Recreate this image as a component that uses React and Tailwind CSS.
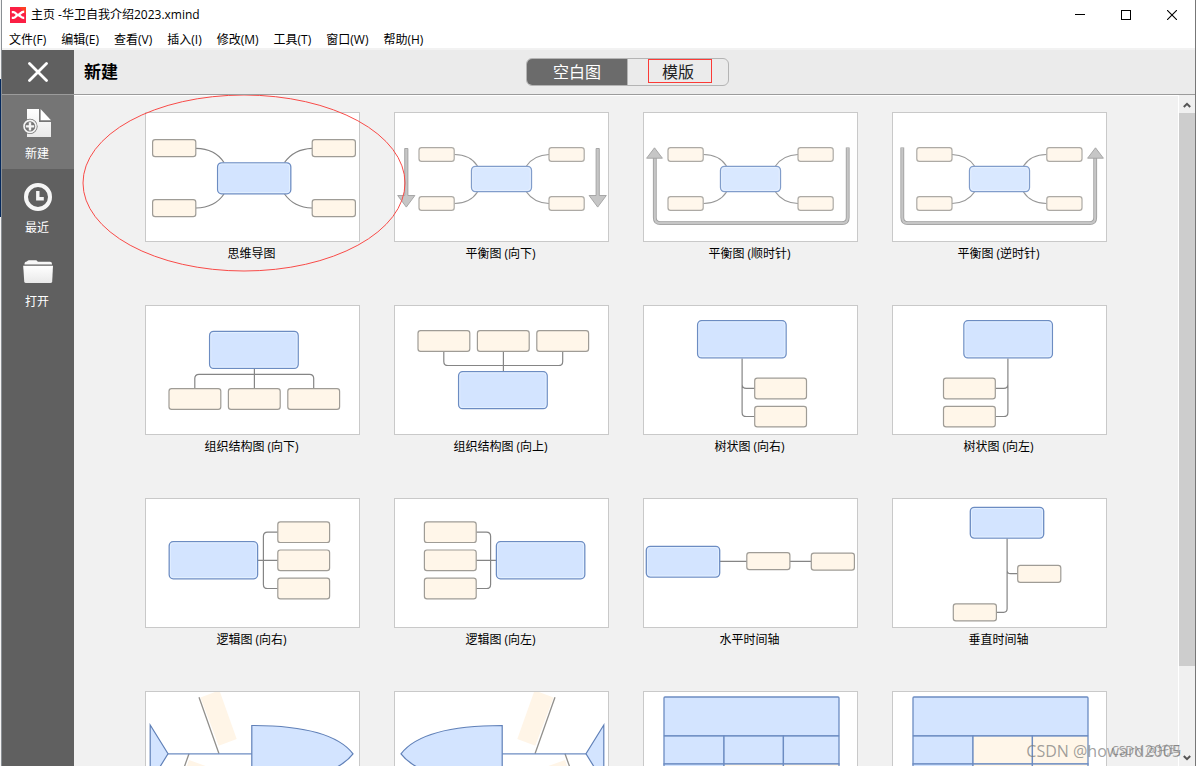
import React from "react";

const MENUS = [
  "文件(F)",
  "编辑(E)",
  "查看(V)",
  "插入(I)",
  "修改(M)",
  "工具(T)",
  "窗口(W)",
  "帮助(H)",
];

/* ---------- diagram primitives ---------- */

function Main({ x, y, w, h }) {
  return (
    <g>
      <rect x={x} y={y} width={w} height={h} rx="4" fill="#d3e4ff" stroke="#6c8cc2" strokeWidth="1.3" />
      <rect x={x + 1.2} y={y + 1.2} width={w - 2.4} height={h - 2.4} rx="3" fill="none" stroke="#e6f1ff" strokeWidth="0.8" />
    </g>
  );
}

function Topic({ x, y, w, h }) {
  return <rect x={x} y={y} width={w} height={h} rx="2.6" fill="#fff6e9" stroke="#9f9c96" strokeWidth="1.2" />;
}

function Line({ d }) {
  return <path d={d} fill="none" stroke="#858585" strokeWidth="1.2" />;
}

function Mirror({ children }) {
  return <g transform="translate(215 0) scale(-1 1)">{children}</g>;
}

function Balanced() {
  return (
    <g opacity="0.85">
      <Line d="M60.5 42.5Q76 42.5 83.5 54M60.5 91.5Q76 91.5 83.5 80M155 42.5Q140 43 132.5 54M155 91.5Q140 91 132.5 80" />
      <Topic x={25} y={35.6} w={35.2} h={13.8} />
      <Topic x={25} y={84.6} w={35.2} h={13.8} />
      <Topic x={155} y={35.6} w={35.2} h={13.8} />
      <Topic x={155} y={84.6} w={35.2} h={13.8} />
      <Main x={77.5} y={54.4} w={60} h={25.2} />
    </g>
  );
}

function DownArrow({ x }) {
  return (
    <path
      d={`M${x - 1.6} 36.5h3.2v47h7l-8.6 11.6l-8.6 -11.6h7z`}
      fill="#c6c6c6"
      stroke="#a0a0a0"
      strokeWidth="0.9"
    />
  );
}

function TurnArrow() {
  const d = "M11.8 46V105.5Q11.8 111.2 17.5 111.2H199Q204.7 111.2 204.7 105.5V35.5";
  return (
    <g>
      <path d={d} fill="none" stroke="#9d9d9d" strokeWidth="3.8" />
      <path d={d} fill="none" stroke="#c6c6c6" strokeWidth="2.2" />
      <path d="M11.5 35.8L19.4 46.2H3.6Z" fill="#c6c6c6" stroke="#a0a0a0" strokeWidth="0.9" />
    </g>
  );
}

function MindMap() {
  return (
    <g>
      <Line d="M51 36.3Q70 36.5 79 50.5M51 96Q70 95.5 79 82M167 36.3Q149 37 139.5 50.5M167 96Q149 95.5 139.5 82" />
      <Topic x={7.6} y={27.7} w={43.2} h={17} />
      <Topic x={7.6} y={87.7} w={43.2} h={17} />
      <Topic x={167.2} y={27.7} w={43.2} h={17} />
      <Topic x={167.2} y={87.7} w={43.2} h={17} />
      <Main x={72.6} y={50.8} w={73.2} h={31} />
    </g>
  );
}

function OrgDown() {
  return (
    <g>
      <Line d="M109.4 64V83.5M49.8 83.5V73.5Q49.8 69.4 54 69.4H164.5Q168.7 69.4 168.7 73.5V83.5" />
      <Main x={64.6} y={26.4} w={88.6} h={37} />
      <Topic x={24} y={83.7} w={51.8} h={20.6} />
      <Topic x={83.4} y={83.7} w={51.8} h={20.6} />
      <Topic x={142.8} y={83.7} w={51.8} h={20.6} />
    </g>
  );
}

function OrgUp() {
  return (
    <g>
      <Line d="M109.4 46.5V66.5M49.8 46.5V56.4Q49.8 60.5 54 60.5H164.5Q168.7 60.5 168.7 56.4V46.5" />
      <Main x={64.6} y={66.7} w={88.6} h={37} />
      <Topic x={24} y={25.7} w={51.8} h={20.6} />
      <Topic x={83.4} y={25.7} w={51.8} h={20.6} />
      <Topic x={142.8} y={25.7} w={51.8} h={20.6} />
    </g>
  );
}

function Tree() {
  return (
    <g>
      <Line d="M99.1 53.5V79.3Q99.1 83.4 103.3 83.4H111.5M99.1 53.5V107.4Q99.1 111.5 103.3 111.5H111.5" />
      <Main x={54.6} y={15.7} w={88.5} h={37.2} />
      <Topic x={111.7} y={73.2} w={51.8} h={20.6} />
      <Topic x={111.7} y={101.3} w={51.8} h={20.6} />
    </g>
  );
}

function Logic() {
  return (
    <g>
      <Line d="M112.7 62.4H132.7M132.7 34.2H122.6Q118.4 34.2 118.4 38.3V86.4Q118.4 90.5 122.6 90.5H132.7" />
      <Main x={24.2} y={43.7} w={88.4} h={37.1} />
      <Topic x={132.8} y={23.9} w={51.8} h={20.6} />
      <Topic x={132.8} y={52} w={51.8} h={20.6} />
      <Topic x={132.8} y={80.2} w={51.8} h={20.6} />
    </g>
  );
}

function TimelineH() {
  return (
    <g>
      <Line d="M77 63.4H104M147 63.4H168" />
      <Main x={3.3} y={48.3} w={73.4} h={30.8} />
      <Topic x={103.8} y={54.6} w={43.1} h={17.1} />
      <Topic x={168.3} y={55.1} w={43.1} h={17.1} />
    </g>
  );
}

function TimelineV() {
  return (
    <g>
      <Line d="M115.1 40.5V72.2Q115.1 75.7 118.6 75.7H125.5M115.1 40.5V110.8Q115.1 114.3 111.6 114.3H104.6" />
      <Main x={78.3} y={9.3} w={73.4} h={30.8} />
      <Topic x={125.7} y={67.3} w={43.1} h={17.1} />
      <Topic x={61.3} y={105.8} w={43.1} h={17.1} />
    </g>
  );
}

function Fishbone() {
  return (
    <g>
      <path d="M55.5 6.6L70 1H75L91.7 48L73.7 54.7Z" fill="#fff5e7" />
      <path d="M44 69L62 75.5L46 120L28 113Z" fill="#fff5e7" />
      <path d="M54 6.3L74 62.7M44 62.7L24 119" fill="none" stroke="#92908c" strokeWidth="1.3" />
      <path d="M23 62.8H106.8" fill="none" stroke="#6c8cc2" strokeWidth="1.3" />
      <path
        d="M5.2 34L23 62.8L5.2 91.6ZM106.8 34.5C153 34.5 192 42 208 62.8C192 83.6 153 91 106.8 91Z"
        fill="#d3e4ff"
        stroke="#6080b8"
        strokeWidth="1.2"
      />
    </g>
  );
}

function Matrix({ cell }) {
  return (
    <g stroke="#6c8cc2" strokeWidth="1.3" fill="#d3e4ff">
      <rect x="21" y="6" width="175" height="39" rx="1" />
      <rect x="21" y="45" width="60" height="28" />
      <rect x="81" y="45" width="59.4" height="28" fill={cell} />
      <rect x="140.4" y="45" width="55.6" height="28" fill={cell} />
      <rect x="21" y="73" width="60" height="28" />
      <rect x="81" y="73" width="59.4" height="28" fill="#fff6e9" />
      <rect x="140.4" y="73" width="55.6" height="28" fill="#fff6e9" />
    </g>
  );
}

const TEMPLATES = [
  { label: "思维导图", art: <MindMap />, marked: true },
  { label: "平衡图 (向下)", art: <g><Balanced /><DownArrow x={12.3} /><DownArrow x={203.7} /></g> },
  { label: "平衡图 (顺时针)", art: <g><Balanced /><TurnArrow /></g> },
  { label: "平衡图 (逆时针)", art: <Mirror><Balanced /><TurnArrow /></Mirror> },
  { label: "组织结构图 (向下)", art: <OrgDown /> },
  { label: "组织结构图 (向上)", art: <OrgUp /> },
  { label: "树状图 (向右)", art: <Tree /> },
  { label: "树状图 (向左)", art: <Mirror><Tree /></Mirror> },
  { label: "逻辑图 (向右)", art: <Logic /> },
  { label: "逻辑图 (向左)", art: <Mirror><Logic /></Mirror> },
  { label: "水平时间轴", art: <TimelineH /> },
  { label: "垂直时间轴", art: <TimelineV /> },
  { label: "鱼骨图 (向右)", art: <Fishbone /> },
  { label: "鱼骨图 (向左)", art: <Mirror><Fishbone /></Mirror> },
  { label: "矩阵图 (行)", art: <Matrix cell="#d3e4ff" /> },
  { label: "矩阵图 (列)", art: <Matrix cell="#fff6e9" /> },
];

function TemplateCard({ label, art, marked }) {
  return (
    <button type="button" className="relative flex flex-col items-center gap-1 text-xs leading-4 text-black">
      <span className="block w-full border border-[#c9c9c9] bg-white">
        <svg viewBox="1 1 213 128" className="block h-auto w-full" aria-hidden="true">
          {art}
        </svg>
      </span>
      <span className="pr-0.5">{label}</span>
      {marked && (
        <svg
          viewBox="0 0 324 178"
          className="pointer-events-none absolute -top-[18px] -left-[63px] z-10 h-[178px] w-[324px] max-w-none"
          aria-hidden="true"
        >
          <ellipse cx="162" cy="89" rx="161" ry="88" fill="none" stroke="#f94b48" strokeWidth="1" />
        </svg>
      )}
    </button>
  );
}

/* ---------- sidebar ---------- */

function IconDefs() {
  return (
    <defs>
      <linearGradient id="paper" x1="0" y1="0" x2="0" y2="1">
        <stop offset="0" stopColor="#ffffff" />
        <stop offset="1" stopColor="#e9e9e9" />
      </linearGradient>
    </defs>
  );
}

function NewIcon() {
  return (
    <svg viewBox="0 0 32 32" className="size-8" aria-hidden="true">
      <IconDefs />
      <path d="M5 2H17V15H29V30H5Z" fill="url(#paper)" />
      <path d="M18.6 2L29 13.2H18.6Z" fill="#fff" />
      <circle cx="8" cy="19.4" r="7.6" fill="#757575" />
      <circle cx="8" cy="19.4" r="6" fill="#757575" stroke="#f4f4f4" strokeWidth="1.6" />
      <path d="M8 15.2V23.6M3.8 19.4H12.2" stroke="#f4f4f4" strokeWidth="2.4" />
    </svg>
  );
}

function RecentIcon() {
  return (
    <svg viewBox="0 0 32 32" className="size-8" aria-hidden="true">
      <circle cx="16" cy="16" r="12" fill="none" stroke="#f6f6f6" strokeWidth="4" />
      <path d="M15.8 10V17.8H21.8" fill="none" stroke="#f6f6f6" strokeWidth="3.4" />
    </svg>
  );
}

function OpenIcon() {
  return (
    <svg viewBox="0 0 32 32" className="size-8" aria-hidden="true">
      <path d="M2.5 9Q2.5 6.4 4.8 6.4L6 5.6Q6.2 5.2 7 5.2H14Q14.8 5.2 15.2 6L15.8 6.8H28Q30 6.8 30 9V9.6H2.5Z" fill="#f8f8f8" />
      <path d="M1.2 10.8H31L30.2 26.4Q30 28 28.4 28H4Q2.4 28 2.2 26.4Z" fill="url(#paper)" />
    </svg>
  );
}

function SideItem({ icon, label, active }) {
  return (
    <button
      type="button"
      className={
        "flex h-[74px] w-full flex-col items-center gap-[7px] pt-3 text-xs leading-4 text-white " +
        (active ? "bg-[#757575]" : "")
      }
    >
      {icon}
      <span className="pr-0.5">{label}</span>
    </button>
  );
}

/* ---------- window ---------- */

function TitleBar() {
  return (
    <header className="flex h-[29px] shrink-0 items-center bg-white pl-2">
      <svg viewBox="0 0 16 16" className="size-4" aria-hidden="true">
        <rect width="16" height="16" fill="#fb1f44" />
        <path d="M9 0H16V7Z" fill="#ff3d24" />
        <path d="M1.8 5.2H3.6C5.6 5.2 6 8 8 8S10.6 4.6 14.2 4.6M1.8 10.8H3.6C5.6 10.8 6 8 8 8S10.6 11 14.2 11" fill="none" stroke="#fff" strokeWidth="2.3" />
      </svg>
      <h1 className="ml-[5px] flex-1 text-xs leading-4 text-black">主页 -华卫自我介绍2023.xmind</h1>
      <div className="flex h-full">
        <button type="button" aria-label="最小化" className="flex w-[46px] items-center justify-center">
          <svg viewBox="0 0 10 10" className="size-[10px]"><path d="M0 4.5H10" stroke="#000" /></svg>
        </button>
        <button type="button" aria-label="最大化" className="flex w-[46px] items-center justify-center">
          <svg viewBox="0 0 10 10" className="size-[10px]"><rect x="0.5" y="0.5" width="9" height="9" fill="none" stroke="#000" /></svg>
        </button>
        <button type="button" aria-label="关闭窗口" className="flex w-[46px] items-center justify-center">
          <svg viewBox="0 0 10 10" className="size-[10px]"><path d="M0 0L10 10M10 0L0 10" stroke="#000" strokeWidth="1.1" /></svg>
        </button>
      </div>
    </header>
  );
}

function ScrollRail() {
  return (
    <div className="flex w-[17px] shrink-0 flex-col border-l border-white bg-[#f0f0f0] pt-px">
      <button type="button" aria-label="向上滚动" className="flex h-[17px] shrink-0 items-center justify-center">
        <svg viewBox="0 0 8 6" className="h-[6px] w-2"><path d="M0.8 5L4 1.8L7.2 5" fill="none" stroke="#555" strokeWidth="2" /></svg>
      </button>
      <div className="min-h-0 flex-1">
        <div className="h-[87%] bg-[#cdcdcd]" />
      </div>
      <button type="button" aria-label="向下滚动" className="flex h-[17px] shrink-0 items-center justify-center">
        <svg viewBox="0 0 8 6" className="h-[6px] w-2"><path d="M0.8 1L4 4.2L7.2 1" fill="none" stroke="#555" strokeWidth="2" /></svg>
      </button>
    </div>
  );
}

export default function App() {
  return (
    <div className="relative flex h-screen overflow-hidden bg-[#f1f1f1] font-['Open_Sans','Noto_Sans_CJK_SC',sans-serif]">
      <div className="flex w-0.5 shrink-0 flex-col border-r border-[#8a8f94]" aria-hidden="true">
        <div className="h-[79px] bg-[#f4f4f4]" />
        <div className="h-[138px] bg-[#04285c]" />
        <div className="flex-1 bg-[#f4f4f4]" />
      </div>

      <div className="flex min-w-0 flex-1 flex-col">
        <TitleBar />
        <nav className="flex h-[21px] shrink-0 items-center gap-[15px] border-b-2 border-[#f2f2f2] bg-white pt-0.5 pl-[7px] text-xs leading-4 text-black">
          {MENUS.map((m) => (
            <button type="button" key={m} className="whitespace-nowrap">
              {m}
            </button>
          ))}
        </nav>

        <div className="flex min-h-0 flex-1">
          <aside className="flex w-[72px] shrink-0 flex-col bg-[#606060]">
            <button
              type="button"
              aria-label="返回"
              className="flex h-[45px] w-full shrink-0 items-center justify-center border-b border-[#9b9b9b]"
            >
              <svg viewBox="0 0 20 20" className="size-5">
                <path d="M1.5 1.5L18.5 18.5M18.5 1.5L1.5 18.5" stroke="#fff" strokeWidth="2.8" strokeLinecap="round" />
              </svg>
            </button>
            <SideItem icon={<NewIcon />} label="新建" active />
            <SideItem icon={<RecentIcon />} label="最近" />
            <SideItem icon={<OpenIcon />} label="打开" />
          </aside>

          <div className="flex min-w-0 flex-1 flex-col">
            <div className="grid h-[45px] shrink-0 grid-cols-[1fr_auto_1fr] items-center border-b border-[#9b9b9b] bg-[#ebebeb] pr-6 pl-2.5">
              <h2 className="text-[17px] leading-6 font-bold text-black">新建</h2>
              <div className="flex h-7 w-[203px] overflow-hidden rounded-md border border-[#b4b4b4] text-base leading-6">
                <button type="button" className="flex-1 bg-[#6b6b6b] text-white">
                  空白图
                </button>
                <button
                  type="button"
                  className="relative flex-1 border-l border-[#b4b4b4] text-[#222]"
                >
                  模版
                  <span className="pointer-events-none absolute top-0 right-4 bottom-0.5 left-5 border border-[#fb3a36]" />
                </button>
              </div>
            </div>

            <div className="flex min-h-0 flex-1">
              <main className="min-w-0 flex-1 overflow-y-auto pt-[17px] pb-8 shadow-[inset_0_1px_0_#ffffff] [scrollbar-width:none]">
                <div className="grid grid-cols-[repeat(auto-fill,215px)] justify-center gap-x-[34px] gap-y-[43px]">
                  {TEMPLATES.map((t) => (
                    <TemplateCard key={t.label} {...t} />
                  ))}
                </div>
              </main>
              <ScrollRail />
            </div>
          </div>
        </div>
      </div>
      <div className="w-px shrink-0 bg-[#777]" aria-hidden="true" />

      <div className="pointer-events-none absolute right-[15px] bottom-[3px] grid items-center justify-items-end whitespace-nowrap text-[#777]/70">
        <span className="col-start-1 row-start-1 text-base leading-6">CSDN @howard2005</span>
        <span className="col-start-1 row-start-1 text-xs leading-6">CSDN @托玛</span>
      </div>
    </div>
  );
}
